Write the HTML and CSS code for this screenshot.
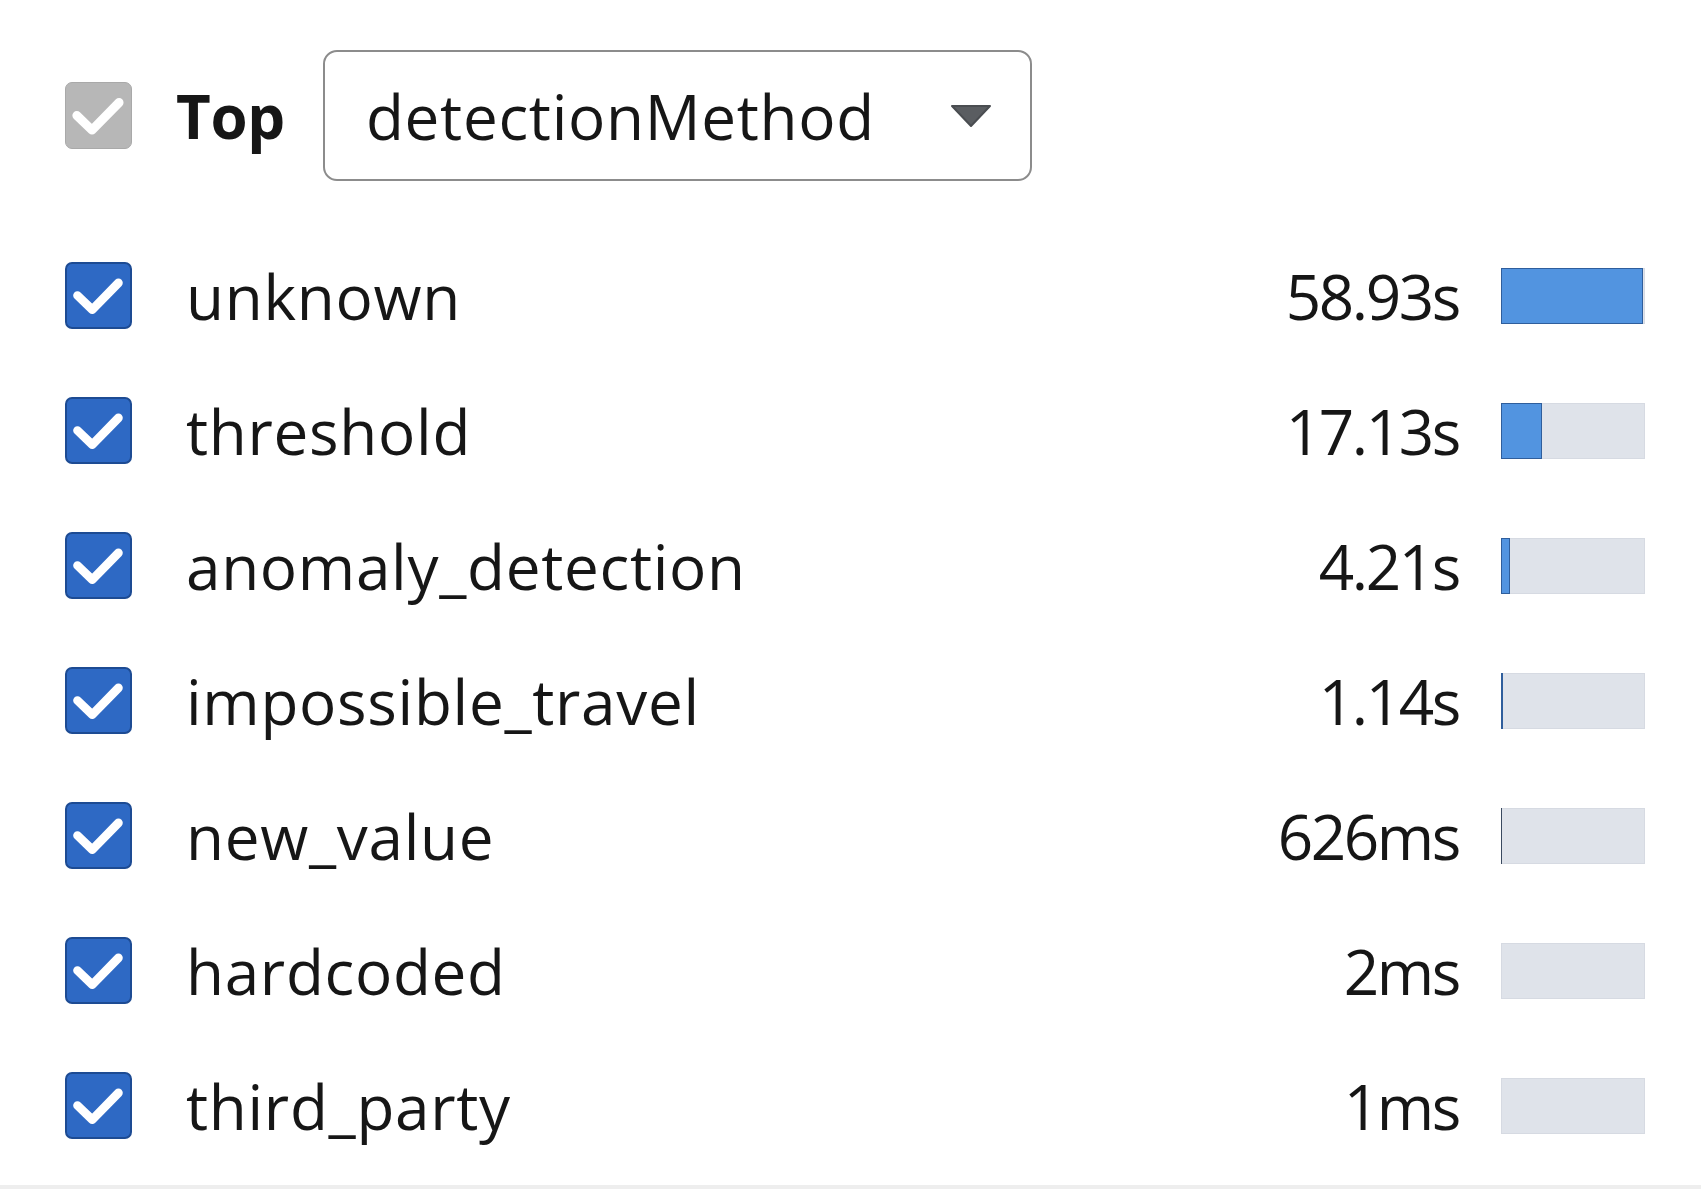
FILE: index.html
```html
<!DOCTYPE html>
<html lang="en">
<head>
<meta charset="utf-8">
<title>Top detectionMethod</title>
<link rel="stylesheet" href="styles.css">
</head>
<body>
<div class="panel">
  <div class="header">
    <span class="cb cb-gray"><svg viewBox="0 0 24 24"><path d="M4 12 L9.6 17.4 L19.6 7.2"/></svg></span>
    <span class="top">Top</span>
    <div class="select">
      <span class="select-text">detectionMethod</span>
      <svg class="caret" viewBox="0 0 42 24"><path d="M2 2 H40 L21 22 Z"/></svg>
    </div>
  </div>
  <div class="list">
    <div class="row">
      <span class="cb cb-blue"><svg viewBox="0 0 24 24"><path d="M4 12 L9.6 17.4 L19.6 7.2"/></svg></span>
      <span class="label">unknown</span>
      <span class="value">58.93s</span>
      <span class="bar"><span class="fill" style="width:100%"></span></span>
    </div>
    <div class="row">
      <span class="cb cb-blue"><svg viewBox="0 0 24 24"><path d="M4 12 L9.6 17.4 L19.6 7.2"/></svg></span>
      <span class="label">threshold</span>
      <span class="value">17.13s</span>
      <span class="bar"><span class="fill" style="width:29%"></span></span>
    </div>
    <div class="row">
      <span class="cb cb-blue"><svg viewBox="0 0 24 24"><path d="M4 12 L9.6 17.4 L19.6 7.2"/></svg></span>
      <span class="label">anomaly_detection</span>
      <span class="value">4.21s</span>
      <span class="bar"><span class="fill" style="width:6.5%"></span></span>
    </div>
    <div class="row">
      <span class="cb cb-blue"><svg viewBox="0 0 24 24"><path d="M4 12 L9.6 17.4 L19.6 7.2"/></svg></span>
      <span class="label">impossible_travel</span>
      <span class="value">1.14s</span>
      <span class="bar"><span class="fill" style="width:2px"></span></span>
    </div>
    <div class="row">
      <span class="cb cb-blue"><svg viewBox="0 0 24 24"><path d="M4 12 L9.6 17.4 L19.6 7.2"/></svg></span>
      <span class="label">new_value</span>
      <span class="value">626ms</span>
      <span class="bar"><span class="fill thin" style="width:1px"></span></span>
    </div>
    <div class="row">
      <span class="cb cb-blue"><svg viewBox="0 0 24 24"><path d="M4 12 L9.6 17.4 L19.6 7.2"/></svg></span>
      <span class="label">hardcoded</span>
      <span class="value">2ms</span>
      <span class="bar"></span>
    </div>
    <div class="row">
      <span class="cb cb-blue"><svg viewBox="0 0 24 24"><path d="M4 12 L9.6 17.4 L19.6 7.2"/></svg></span>
      <span class="label">third_party</span>
      <span class="value">1ms</span>
      <span class="bar"></span>
    </div>
  </div>
</div>
<div class="strip"></div>
</body>
</html>
```
FILE: styles.css
```css
* { box-sizing: border-box; }
html, body { margin: 0; padding: 0; background: #ffffff; }
body {
  font-family: "Open Sans", "Noto Sans", sans-serif;
  color: #161616;
  min-height: 100vh;
  display: flex;
  flex-direction: column;
}
.panel {
  padding: 50px 56px 0 65px;
  flex: 1;
}
.header {
  display: flex;
  align-items: center;
  height: 131px;
}
.cb {
  width: 67px;
  height: 67px;
  border-radius: 7px;
  display: flex;
  align-items: center;
  justify-content: center;
  flex: none;
}
.cb svg { width: 67px; height: 67px; }
.cb svg path {
  fill: none;
  stroke: #ffffff;
  stroke-width: 3.3;
  stroke-linecap: round;
  stroke-linejoin: round;
}
.cb-gray {
  background: #b7b7b7;
  border: 1px solid #a9a9a9;
}
.cb-blue {
  background: #2e69c4;
  border: 2px solid #1d4b93;
}
.top {
  font-weight: 700;
  font-size: 60px;
  margin-left: 44px;
  margin-right: 38px;
  letter-spacing: -0.3px;
}
.select {
  width: 709px;
  height: 131px;
  border: 2px solid #8c8c8c;
  border-radius: 14px;
  display: flex;
  align-items: center;
  justify-content: space-between;
  padding: 0 38px 0 41px;
}
.select-text {
  font-size: 62px;
  letter-spacing: 0.7px;
}
.caret {
  width: 42px;
  height: 24px;
}
.caret path {
  fill: #5a5d61;
  stroke: #4a4d51;
  stroke-width: 2;
  stroke-linejoin: round;
}
.list {
  margin-top: 47px;
  display: flex;
  flex-direction: column;
}
.row {
  height: 135px;
  display: flex;
  align-items: center;
}
.label {
  font-size: 62px;
  letter-spacing: 0.7px;
  margin-left: 54px;
  flex: 1;
  white-space: nowrap;
}
.value {
  font-size: 62px;
  letter-spacing: -2.4px;
  text-align: right;
  margin-right: 42px;
  white-space: nowrap;
}
.bar {
  width: 144px;
  height: 56px;
  background: #dfe3ea;
  border: 1px solid #d6dae2;
  display: flex;
  flex: none;
}
.fill {
  display: block;
  background: #5294e0;
  border: 1px solid #2f5e9c;
  margin: -1px 0 -1px -1px;
  height: calc(100% + 2px);
}
.fill.thin {
  background: #3a4a60;
  border: none;
}
.strip {
  height: 4px;
  margin-top: 12px;
  background: #eeeeee;
}
```
